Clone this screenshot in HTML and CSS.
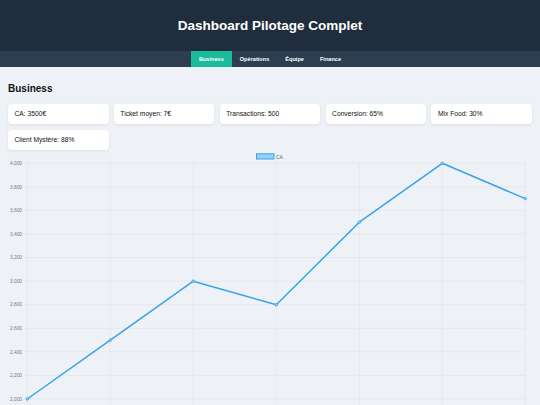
FILE: index.html
```html
<!DOCTYPE html>
<html lang="fr">
<head>
    <meta charset="UTF-8">
    <meta name="viewport" content="width=device-width, initial-scale=1.0">
    <title>Dashboard Pilotage Complet</title>
    <link rel="stylesheet" href="styles.css">
</head>
<body>
    <header class="top-header">
        <h1>Dashboard Pilotage Complet</h1>
    </header>

    <nav class="tabs">
        <button class="tab active">Business</button>
        <button class="tab">Opérations</button>
        <button class="tab">Équipe</button>
        <button class="tab">Finance</button>
    </nav>

    <main class="content">
        <h2>Business</h2>

        <div class="kpi-grid">
            <div class="kpi">CA: 3500€</div>
            <div class="kpi">Ticket moyen: 7€</div>
            <div class="kpi">Transactions: 500</div>
            <div class="kpi">Conversion: 65%</div>
            <div class="kpi">Mix Food: 30%</div>
            <div class="kpi">Client Mystère: 88%</div>
        </div>

        <div class="chart">
            <svg width="524" height="256" viewBox="0 0 524 256">
                <!-- legend -->
                <rect class="legend-box" x="248.5" y="2.8" width="17.5" height="5.2"></rect>
                <text class="legend-text" x="268" y="7.6">CA</text>

                <!-- horizontal grid -->
                <g class="grid">
                    <line x1="16" y1="12.3" x2="517.3" y2="12.3"></line>
                    <line x1="16" y1="35.9" x2="517.3" y2="35.9"></line>
                    <line x1="16" y1="59.4" x2="517.3" y2="59.4"></line>
                    <line x1="16" y1="83" x2="517.3" y2="83"></line>
                    <line x1="16" y1="106.6" x2="517.3" y2="106.6"></line>
                    <line x1="16" y1="130.2" x2="517.3" y2="130.2"></line>
                    <line x1="16" y1="153.7" x2="517.3" y2="153.7"></line>
                    <line x1="16" y1="177.3" x2="517.3" y2="177.3"></line>
                    <line x1="16" y1="200.9" x2="517.3" y2="200.9"></line>
                    <line x1="16" y1="224.4" x2="517.3" y2="224.4"></line>
                    <line x1="16" y1="248" x2="517.3" y2="248"></line>
                </g>

                <!-- vertical grid -->
                <g class="grid">
                    <line x1="19.3" y1="12.3" x2="19.3" y2="256"></line>
                    <line x1="102.3" y1="12.3" x2="102.3" y2="256"></line>
                    <line x1="185.3" y1="12.3" x2="185.3" y2="256"></line>
                    <line x1="268.3" y1="12.3" x2="268.3" y2="256"></line>
                    <line x1="351.3" y1="12.3" x2="351.3" y2="256"></line>
                    <line x1="434.3" y1="12.3" x2="434.3" y2="256"></line>
                    <line x1="517.3" y1="12.3" x2="517.3" y2="256"></line>
                </g>

                <!-- y axis labels -->
                <g class="axis-label">
                    <text x="14" y="14">4,000</text>
                    <text x="14" y="37.6">3,800</text>
                    <text x="14" y="61.1">3,600</text>
                    <text x="14" y="84.7">3,400</text>
                    <text x="14" y="108.3">3,200</text>
                    <text x="14" y="131.9">3,000</text>
                    <text x="14" y="155.4">2,800</text>
                    <text x="14" y="179">2,600</text>
                    <text x="14" y="202.6">2,400</text>
                    <text x="14" y="226.1">2,200</text>
                    <text x="14" y="249.7">2,000</text>
                </g>

                <!-- CA series -->
                <polyline class="series" points="19.3,248 102.3,189.1 185.3,130.2 268.3,153.8 351.3,71.2 434.3,12.3 517.3,47.6"></polyline>
                <g class="points">
                    <circle cx="19.3" cy="248" r="1.3"></circle>
                    <circle cx="102.3" cy="189.1" r="1.3"></circle>
                    <circle cx="185.3" cy="130.2" r="1.3"></circle>
                    <circle cx="268.3" cy="153.8" r="1.3"></circle>
                    <circle cx="351.3" cy="71.2" r="1.3"></circle>
                    <circle cx="434.3" cy="12.3" r="1.3"></circle>
                    <circle cx="517.3" cy="47.6" r="1.3"></circle>
                </g>
            </svg>
        </div>
    </main>
</body>
</html>
```

FILE: styles.css
```css
body { margin: 0; background: #eef2f7; font-family: "Liberation Sans", Arial, sans-serif; color: #111; overflow: hidden; }

.top-header { background: #1f2d3d; height: 51px; display: flex; align-items: center; justify-content: center; }
.top-header h1 { margin: 0; color: #fff; font-size: 13.5px; font-weight: bold; }

.tabs { background: #2c3e50; height: 16px; display: flex; justify-content: center; }
.tab { background: none; border: none; margin: 0; padding: 0 8px; color: #fff; font-family: inherit; font-size: 5.6px; font-weight: bold; cursor: pointer; }
.tab.active { background: #1abc9c; }

.content { padding: 8px 8px 0; }
.content h2 { margin: 8px 0 9.5px; font-size: 10px; line-height: 11.5px; }

.kpi-grid { display: grid; grid-template-columns: repeat(5, 1fr); gap: 5.6px 5.3px; }
.kpi { background: #fff; height: 20px; line-height: 20px; padding: 0 6.5px; border-radius: 4px; box-shadow: 0 1px 3px rgba(0, 0, 0, 0.08); font-size: 6.7px; }

.chart { margin-top: 1.3px; }
.chart svg { display: block; }
.grid line { stroke: #dde2e9; stroke-width: 0.6; }
.axis-label text { font-size: 4.8px; fill: #777; text-anchor: end; }
.legend-box { fill: #9ad0f5; stroke: #36a2eb; stroke-width: 1; }
.legend-text { font-size: 5px; fill: #666; }
.series { fill: none; stroke: #36a2eb; stroke-width: 1.5; stroke-linejoin: round; }
.points circle { fill: #9ad0f5; stroke: #36a2eb; stroke-width: 0.8; }
```
